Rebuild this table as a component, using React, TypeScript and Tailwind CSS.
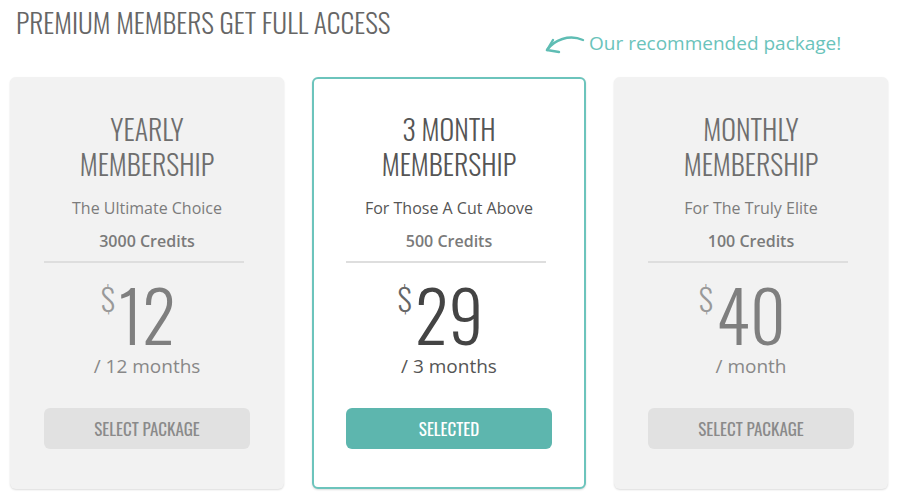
interface Plan {
  title: string[];
  tagline: string;
  credits: string;
  price: number;
  period: string;
  selected?: boolean;
}

const plans: Plan[] = [
  { title: ["YEARLY", "MEMBERSHIP"], tagline: "The Ultimate Choice", credits: "3000 Credits", price: 12, period: "/ 12 months" },
  { title: ["3 MONTH", "MEMBERSHIP"], tagline: "For Those A Cut Above", credits: "500 Credits", price: 29, period: "/ 3 months", selected: true },
  { title: ["MONTHLY", "MEMBERSHIP"], tagline: "For The Truly Elite", credits: "100 Credits", price: 40, period: "/ month" },
];

function PlanCard({ plan }: { plan: Plan }) {
  const on = plan.selected;
  return (
    <div
      className={`rounded-md border-2 px-[32px] pt-[32px] pb-[38px] shadow-[0_1px_2px_rgba(0,0,0,0.14)] ${
        on ? "border-[#6cc4bc] bg-white" : "border-transparent bg-[#f2f2f2]"
      }`}
    >
      {/* Title */}
      <h2
        className={`font-['Oswald',sans-serif] text-[28px] font-light leading-[35px] text-center ${
          on ? "text-[#555]" : "text-[#6e6e6e]"
        }`}
      >
        {plan.title[0]}
        <br />
        {plan.title[1]}
      </h2>

      <p className={`mt-[15px] text-center text-[16px] leading-[24px] ${on ? "text-[#555]" : "text-[#7c7c7c]"}`}>
        {plan.tagline}
      </p>
      <p className="mt-[9px] text-center text-[16px] font-semibold leading-[24px] text-[#7a7a7a]">{plan.credits}</p>
      <div className="mt-2 h-[2px] w-[200px] bg-[#dedede]" />

      {/* Price */}
      <div className="mt-[17px] flex justify-center">
        <div className="relative">
          <span
            className={`absolute right-full top-[3px] mr-[3px] font-['Oswald',sans-serif] text-[31px] font-light leading-none ${
              on ? "text-[#666]" : "text-[#999]"
            }`}
          >
            $
          </span>
          <span
            className={`block font-['Oswald',sans-serif] text-[69px] font-light leading-none ${
              on ? "text-[#444]" : "text-[#7f7f7f]"
            }`}
          >
            {plan.price}
          </span>
        </div>
      </div>
      <p className={`mt-[5px] text-center text-[19px] leading-[24px] ${on ? "text-[#555]" : "text-[#888]"}`}>
        {plan.period}
      </p>

      <button
        className={`mt-[30px] flex h-[41px] w-full items-center justify-center rounded-md font-['Oswald',sans-serif] text-[17px] ${
          on ? "bg-[#5db6ae] text-white" : "bg-[#e1e1e1] text-[#8a8a8a]"
        }`}
      >
        {on ? "SELECTED" : "SELECT PACKAGE"}
      </button>
    </div>
  );
}

export default function App() {
  return (
    <div className="h-[504px] w-[900px] bg-white font-['Open_Sans',sans-serif]">
      {/* Header */}
      <div className="flex h-[77px] items-start">
        <h1 className="w-[542px] pl-4 pt-[6px] font-['Oswald',sans-serif] text-[27.5px] font-light leading-[32px] text-[#666]">
          PREMIUM MEMBERS GET FULL ACCESS
        </h1>
        <div className="flex items-center gap-[3px] pt-[31px]">
          <svg width="44" height="24" viewBox="0 0 44 24" fill="none" stroke="#5fbdb4" strokeWidth="2.4" strokeLinecap="round" strokeLinejoin="round">
            <path d="M5 19C12 9 27 3 41 9" />
            <path d="M11 9L5 19L17 21" />
          </svg>
          <span className="text-[19px] leading-[24px] text-[#6ac3bb]">Our recommended package!</span>
        </div>
      </div>

      {/* Plans */}
      <div className="grid grid-cols-[274px_274px_274px] gap-[28px] pl-[10px]">
        {plans.map((p) => (
          <PlanCard key={p.price} plan={p} />
        ))}
      </div>
    </div>
  );
}
